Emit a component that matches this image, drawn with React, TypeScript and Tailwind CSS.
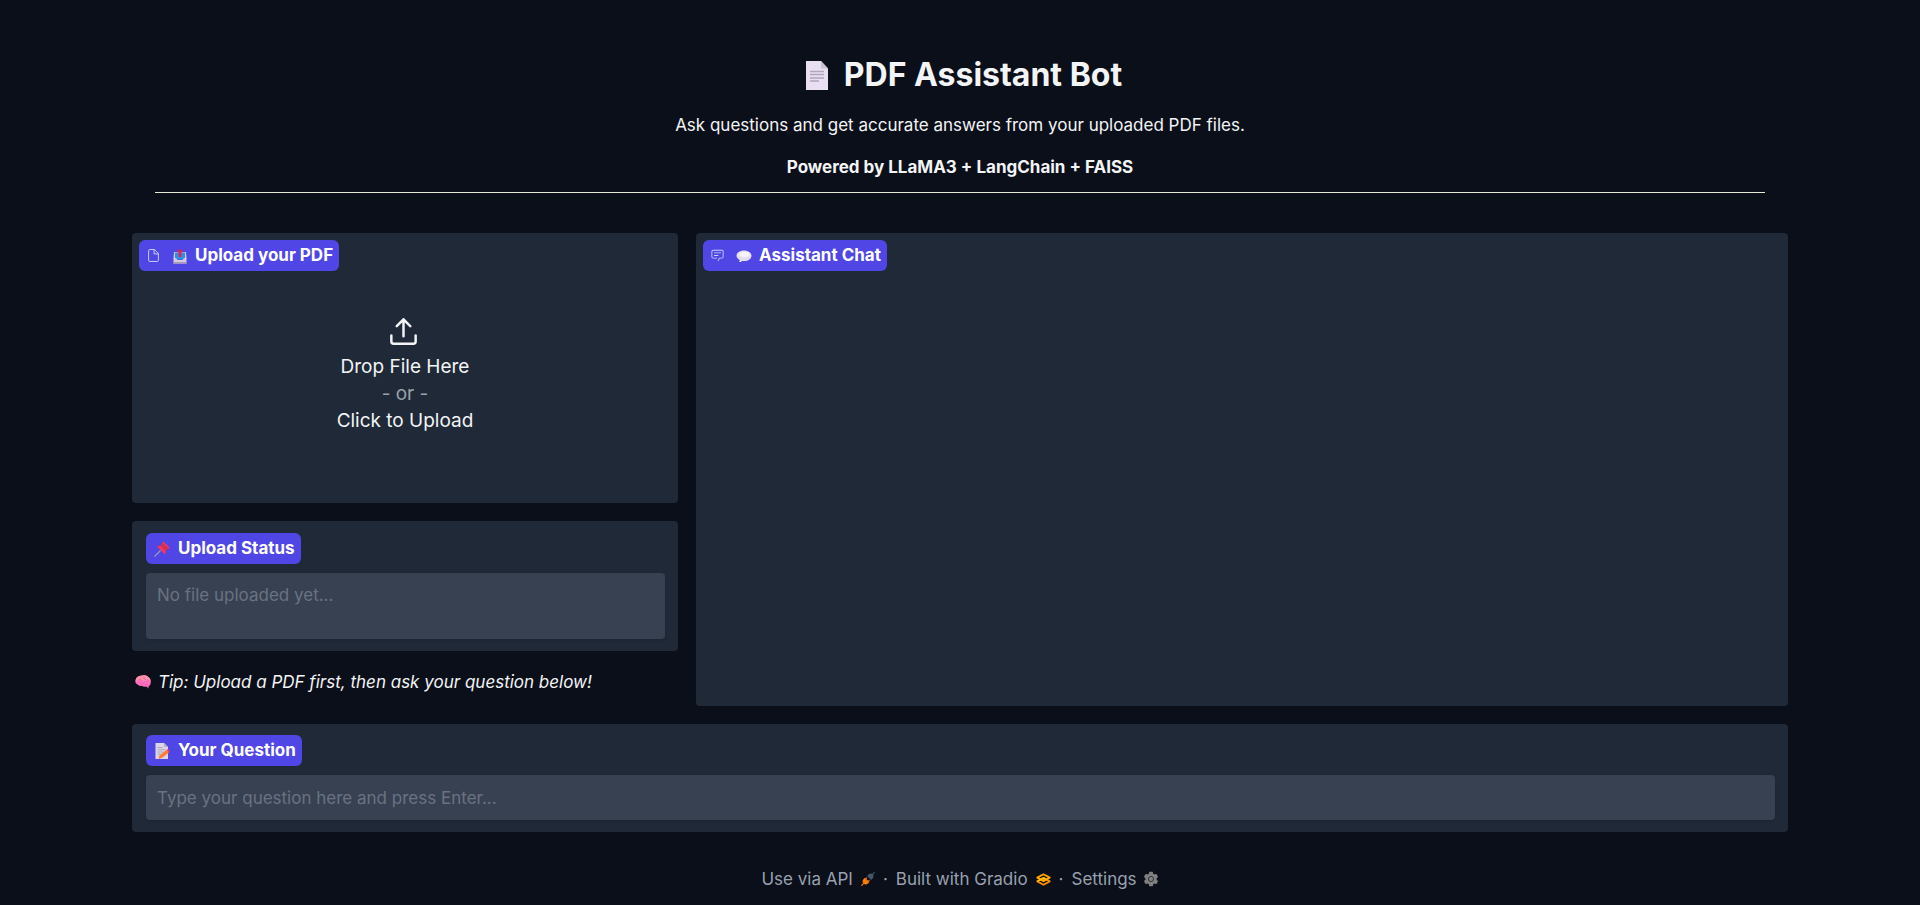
import React from "react";

type IconProps = { className?: string };

const PageIcon = ({ className }: IconProps) => (
  <svg viewBox="0 0 22 29" className={className} aria-hidden="true">
    <path d="M0 0h15l7 7.500v21.500h-22z" fill="#e9dff2" />
    <path d="M15 0l7 7.500h-7z" fill="#c9c2d2" />
    <path d="M4 10.500h14M4 13.500h14M4 17h14M4 20h9" stroke="#b0a6bb" strokeWidth="1.300" />
  </svg>
);

const FileIcon = ({ className }: IconProps) => (
  <svg viewBox="0 0 24 24" fill="none" stroke="currentColor" strokeWidth="1.800" strokeLinecap="round" strokeLinejoin="round" className={className} aria-hidden="true">
    <path d="M13 1H5a2 2 0 0 0-2 2v18a2 2 0 0 0 2 2h14a2 2 0 0 0 2-2V9z" />
    <path d="M13 1v8h8" />
  </svg>
);

const OutboxIcon = ({ className }: IconProps) => (
  <svg viewBox="0 0 16 16" className={className} aria-hidden="true">
    <path d="M2 4h12l.5 7h-13z" fill="#c9cfe0" />
    <path d="M3 4.500h10v7h-10z" fill="#2f8fe0" />
    <path d="M1.500 10h2.500l1.500 2h5l1.500-2h2.500v5.500h-13z" fill="#d5c9e2" />
    <path d="M1.500 14h13v1.500h-13z" fill="#a89bb8" />
    <path d="M8 .5l3.200 3.700h-1.900v4.800h-2.600V4.200H4.800z" fill="#e0244f" />
  </svg>
);

const ChatIcon = ({ className }: IconProps) => (
  <svg viewBox="1 3 30 28" fill="currentColor" className={className} aria-hidden="true">
    <path d="M17.740 30L16 29l4-7h6a2 2 0 0 0 2-2V8a2 2 0 0 0-2-2H6a2 2 0 0 0-2 2v12a2 2 0 0 0 2 2h9v2H6a4 4 0 0 1-4-4V8a4 4 0 0 1 4-4h20a4 4 0 0 1 4 4v12a4 4 0 0 1-4 4h-4.840z" />
    <path d="M8 10h16v2H8zM8 16h10v2H8z" />
  </svg>
);

const BubbleIcon = ({ className }: IconProps) => (
  <svg viewBox="0 0 16 16" className={className} aria-hidden="true">
    <path d="M8 2.500c4.300 0 7.500 2.300 7.500 5.300s-3.200 5.300-7.500 5.300c-.7 0-1.300 0-1.900-.2-.7.800-1.800 1.300-3.100 1.200.5-.6.800-1.300.7-2.200C1.700 11 .5 9.500.5 7.800.5 4.800 3.700 2.500 8 2.500z" fill="#e6dcef" />
    <ellipse cx="8.500" cy="6.500" rx="5" ry="2.800" fill="#f6f2fa" />
  </svg>
);

const UploadIcon = ({ className }: IconProps) => (
  <svg viewBox="0 0 24 24" fill="none" stroke="currentColor" strokeWidth="2.200" strokeLinecap="round" strokeLinejoin="round" className={className} aria-hidden="true">
    <path d="M1.200 15.500V20.800a2 2 0 0 0 2 2h17.600a2 2 0 0 0 2-2V15.500" />
    <path d="M6 7.200l6-6 6 6M12 1.200v15" />
  </svg>
);

const PinIcon = ({ className }: IconProps) => (
  <svg viewBox="0 0 16 16" className={className} aria-hidden="true">
    <path d="M6.200 9.800L.8 15.200" stroke="#a9a3b5" strokeWidth="1.200" strokeLinecap="round" />
    <path d="M9.500.8l5.900 5.500c.4.800-.3 1.500-1.200 1.200L11.600 9.700c.4 1.500.1 2.700-.8 3.500L3 5.600c.9-.9 2.200-1.100 3.600-.7L8.400 2c-.1-1 .4-1.400 1.100-1.200z" fill="#f2385f" />
    <path d="M8.400 2l6 5.500-2.800 2.200L6.600 4.900z" fill="#d42c55" />
  </svg>
);

const BrainIcon = ({ className }: IconProps) => (
  <svg viewBox="0 0 16 16" className={className} aria-hidden="true">
    <path d="M5.500 1.800C8 .8 11 1.100 13 2.700c2.200 1.300 3.200 3.800 2.700 6-.1 1.900-.9 3-2.200 3.500l.1 2.300-2.300-1.900c-1.800.5-3.400.2-4.600-.8-2 .3-3.800-.3-4.600-1.700C.4 9.200 0 7.600.6 6.100.9 3.700 2.900 2.100 5.500 1.800z" fill="#ff6fc0" />
    <path d="M5.500 1.800C8 .8 11 1.100 13 2.700c1.300.9 2.200 2.200 2.600 3.700H.5C.9 3.700 2.900 2.100 5.500 1.800z" fill="#ff92a8" />
    <path d="M3.500 6c1.400-.8 2.400-.6 3.200.4M9 3.500c-.3 1.200.3 2 1.700 2.200M12.800 5.700c.5 1.300.2 2.200-.8 2.900M5.500 9.200c1.400.7 2.800.4 3.800-.8M9.800 11c1-.8 2-.9 3-.4" fill="none" stroke="#e255ad" strokeWidth=".8" strokeLinecap="round" />
  </svg>
);

const MemoIcon = ({ className }: IconProps) => (
  <svg viewBox="0 0 16 16" className={className} aria-hidden="true">
    <path d="M1.500 0h8.500l4 4v12h-12.500z" fill="#ddd5e6" />
    <path d="M10 0l4 4h-4z" fill="#b5aebf" />
    <path d="M3.500 4.500h5M3.500 6.800h8M3.500 9h6M3.500 11.200h3" stroke="#a79db4" strokeWidth=".9" />
    <path d="M12.500 7l2.500 2.500-7.300 5.500-3.200.8.900-3.200z" fill="#ff7a33" />
    <path d="M12.500 7l1-.8c1.200-.1 2.200.9 2.200 2.400l-.7.900z" fill="#f0415a" />
  </svg>
);

const PlugIcon = ({ className }: IconProps) => (
  <svg viewBox="0 0 16 16" className={className} aria-hidden="true">
    <path d="M2.800 13.200L.8 15.200" stroke="#ff7c00" strokeWidth="1.300" strokeLinecap="round" />
    <path d="M13.200 2.800l2-2" stroke="#475569" strokeWidth="1.300" strokeLinecap="round" />
    <path d="M4.500 6.500l5 5-1.800 1.800c-1.500 1.200-3.400 1.200-4.700-.2-1.500-1.300-1.500-3.300-.3-4.800z" fill="#ff7c00" />
    <path d="M4.800 8.300l1.700-1.700M7.700 11.200l1.700-1.700" stroke="#ff7c00" strokeWidth="1.200" strokeLinecap="round" />
    <path d="M7 4.500l4.500 4.500 1.800-1.700c1.400-1.500 1.300-3.300.1-4.600-1.400-1.400-3.200-1.300-4.700-.1z" fill="#475569" />
  </svg>
);

const GradioIcon = ({ className }: IconProps) => (
  <svg viewBox="0 0 16 14" fill="none" strokeLinejoin="round" className={className} aria-hidden="true">
    <path d="M8 5.300L14.700 9 8 12.700 1.300 9z" stroke="#ff8a00" strokeWidth="2" />
    <path d="M8 1.300L14.700 5 8 8.700 1.300 5z" stroke="#ffa800" strokeWidth="2" />
    <path d="M1.300 9L8 5.300 11 7" stroke="#ffc400" strokeWidth="1.600" />
  </svg>
);

const GearIcon = ({ className }: IconProps) => (
  <svg viewBox="0 0 16 16" className={className} aria-hidden="true">
    <g fill="#808080">
      <circle cx="8" cy="8" r="5.700" />
      <rect x="6" y=".8" width="4" height="14.400" rx=".8" />
      <rect x="6" y=".8" width="4" height="14.400" rx=".8" transform="rotate(60 8 8)" />
      <rect x="6" y=".8" width="4" height="14.400" rx=".8" transform="rotate(120 8 8)" />
    </g>
    <circle cx="8" cy="8" r="2.600" fill="#808080" stroke="#30343c" strokeWidth="1" />
  </svg>
);

const badge = "inline-flex h-[31px] items-center rounded-md bg-[#4f46e5] pr-[6px] pl-2 text-[17px] font-bold whitespace-nowrap text-white";
const panel = "rounded-[4px] bg-[#1f2937]";
const field = "block w-full resize-none rounded-[4px] bg-[#374151] px-[11px] text-[17px] leading-6 text-gray-100 shadow-sm outline-none placeholder:text-gray-500";

export default function App() {
  return (
    <div className="min-h-screen bg-[#0b0f19] px-4 font-['Inter',sans-serif] text-gray-100">
      <main className="mx-auto flex max-w-[1656px] flex-col gap-[18px] pt-[57px]">
        <header className="mx-[23px] mb-[22px] border-b border-[#e5e7d8] pb-[13px] text-center">
          <h1 className="flex items-center justify-center gap-4 pl-2 text-[32px] leading-9 font-bold">
            <PageIcon className="h-[29px] w-[22px]" />
            PDF Assistant Bot
          </h1>
          <p className="mt-5 text-[17px] leading-6">Ask questions and get accurate answers from your uploaded PDF files.</p>
          <p className="mt-[18px] text-[17px] leading-6 font-bold">Powered by LLaMA3 + LangChain + FAISS</p>
        </header>

        <div className="grid gap-[18px] lg:grid-cols-[1fr_2fr]">
          <div className="flex flex-col gap-[18px]">
            <section className={`${panel} flex h-[270px] flex-col items-start p-[7px]`}>
              <h2 className={badge}>
                <FileIcon className="mr-3 size-[13px] text-indigo-200" />
                <OutboxIcon className="mr-[7px] size-4" />
                Upload your PDF
              </h2>
              <button type="button" className="flex w-full flex-1 cursor-pointer flex-col items-center justify-center pb-4 text-[19px] leading-[27px]">
                <UploadIcon className="mr-1 mb-2 size-[27px]" />
                <span>Drop File Here</span>
                <span className="text-gray-400">- or -</span>
                <span>Click to Upload</span>
              </button>
            </section>

            <section className={`${panel} py-3 pr-[13px] pl-[14px]`}>
              <label htmlFor="status" className={badge}>
                <PinIcon className="mr-2 size-4" />
                Upload Status
              </label>
              <textarea id="status" readOnly placeholder="No file uploaded yet..." className={`${field} mt-[9px] h-[66px] py-[10px]`} />
            </section>

            <p className="flex items-center gap-[7px] px-[3px] pt-[1px] text-[17px] leading-6 italic">
              <BrainIcon className="size-4" />
              Tip: Upload a PDF first, then ask your question below!
            </p>
          </div>

          <section className={`${panel} min-h-[473px] p-[7px]`}>
            <h2 className={badge}>
              <ChatIcon className="mr-3 size-[13px] text-indigo-200" />
              <BubbleIcon className="mr-[7px] size-4" />
              Assistant Chat
            </h2>
          </section>
        </div>

        <section className={`${panel} pt-[11px] pr-[13px] pb-3 pl-[14px]`}>
          <label htmlFor="question" className={badge}>
            <MemoIcon className="mr-2 size-4" />
            Your Question
          </label>
          <input id="question" type="text" placeholder="Type your question here and press Enter..." className={`${field} mt-[9px] h-[45px]`} />
        </section>
      </main>

      <footer className="flex items-center justify-center gap-2 pt-[35px] text-[17px] leading-6 text-gray-400">
        <a href="#api" className="flex items-center gap-2">Use via API <PlugIcon className="size-[14px]" /></a>
        <span>·</span>
        <a href="#gradio" className="flex items-center gap-2">Built with Gradio <GradioIcon className="h-[13px] w-[15px]" /></a>
        <span>·</span>
        <a href="#settings" className="flex items-center gap-[6px]">Settings <GearIcon className="size-4" /></a>
      </footer>
    </div>
  );
}
